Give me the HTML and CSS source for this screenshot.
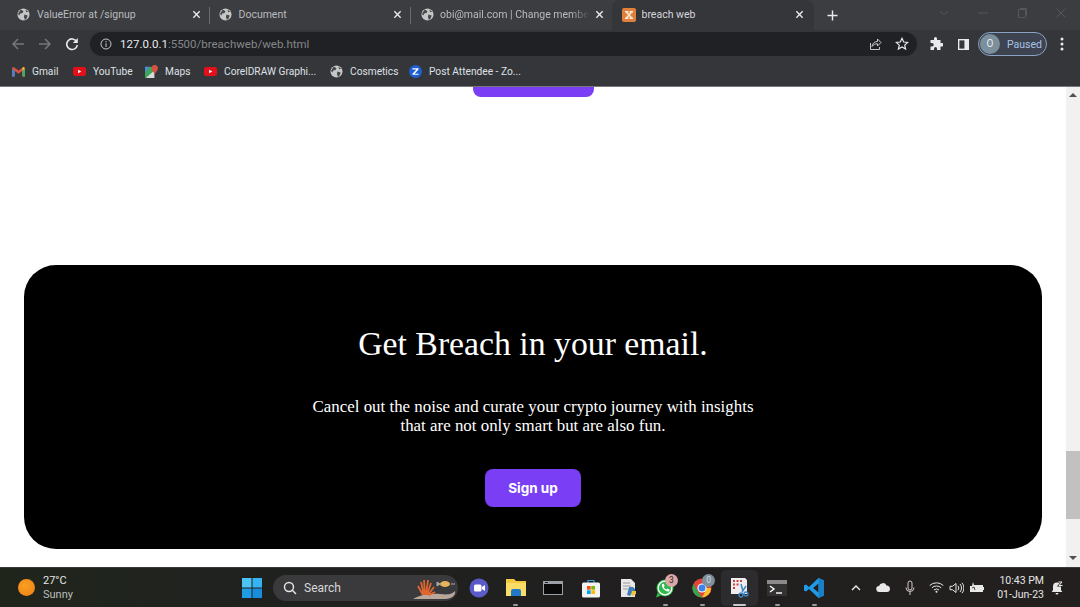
FILE: index.html
```html
<!DOCTYPE html>
<html lang="en">
<head>
<meta charset="utf-8">
<title>breach web</title>
<link rel="stylesheet" href="styles.css">
</head>
<body>
<svg class="defs" width="0" height="0">
  <defs>
    <symbol id="globe" viewBox="0 0 14 14">
      <circle cx="7" cy="7" r="6.500" fill="#c4c7c5"/>
      <path d="M4 1.500 7 3.500 6 5.500 3.500 6 2.500 8 1 6.500ZM8 7l3.500 1-1 3-2 2-1-3.500ZM9 1.500l3 2.500-2 .5Z" fill="#45474a"/>
    </symbol>
    <symbol id="close" viewBox="0 0 10 10">
      <path d="M1.500 1.500l7 7M8.500 1.500l-7 7" stroke="#e8eaed" stroke-width="1.500" fill="none"/>
    </symbol>
    <symbol id="yt" viewBox="0 0 14 10">
      <rect width="14" height="10" rx="3" fill="#e3101b"/>
      <path d="M5.500 3v4L9 5Z" fill="#fff"/>
    </symbol>
  </defs>
</svg>

<header class="tabstrip">
  <div class="tab">
    <svg class="favicon"><use href="#globe"/></svg>
    <span class="tab-title">ValueError at /signup</span>
    <svg class="tab-x"><use href="#close"/></svg>
  </div>
  <div class="tab">
    <svg class="favicon"><use href="#globe"/></svg>
    <span class="tab-title">Document</span>
    <svg class="tab-x"><use href="#close"/></svg>
  </div>
  <div class="tab tab-third">
    <svg class="favicon"><use href="#globe"/></svg>
    <span class="tab-title tab-fade">obi@mail.com | Change membe</span>
    <svg class="tab-x"><use href="#close"/></svg>
  </div>
  <div class="tab tab-active">
    <svg class="favicon favicon-xampp" viewBox="0 0 14 14">
      <rect width="14" height="14" rx="2" fill="#e0803a"/>
      <path d="M3 3h3.500v1.500h-.6L7 5.800 8.100 4.500h-.6V3H11v1.500h-.8L8 7l2.200 2.500h.8V11H7.500V9.500h.6L7 8.200 5.900 9.500h.6V11H3V9.500h.8L6 7 3.800 4.500H3Z" fill="#fbe6d3"/>
    </svg>
    <span class="tab-title tab-title-active">breach web</span>
    <svg class="tab-x"><use href="#close"/></svg>
  </div>
  <svg class="newtab" viewBox="0 0 12 12"><path d="M6 .5v11M.5 6h11" stroke="#e8eaed" stroke-width="1.600"/></svg>
  <div class="winctl">
    <svg viewBox="0 0 10 10"><path d="M1 3.500l4 3 4-3" stroke="#55575b" fill="none"/></svg>
    <svg viewBox="0 0 10 10"><path d="M0 5h10" stroke="#55575b"/></svg>
    <svg viewBox="0 0 10 10"><path d="M1.500 1.500h7v8h-7ZM3 1.500V.5h6.500v7" stroke="#55575b" fill="none"/></svg>
    <svg viewBox="0 0 10 10"><path d="M.5.5l9 9M9.500.5l-9 9" stroke="#55575b"/></svg>
  </div>
</header>

<div class="toolbar">
  <svg class="nav-icon" viewBox="0 0 14 14"><path d="M13 7H2M7 2 2 7l5 5" stroke="#75777b" stroke-width="1.500" fill="none"/></svg>
  <svg class="nav-icon" viewBox="0 0 14 14"><path d="M1 7h11M7 2l5 5-5 5" stroke="#75777b" stroke-width="1.500" fill="none"/></svg>
  <svg class="nav-icon" viewBox="0 0 14 14"><path d="M11.600 4.500A5.300 5.300 0 1 0 12.300 8" stroke="#e8eaed" stroke-width="1.600" fill="none"/><path d="M12.800 1v5h-5Z" fill="#e8eaed"/></svg>
  <div class="omnibox">
    <svg class="info" viewBox="0 0 12 12"><circle cx="6" cy="6" r="5" stroke="#c4c7c5" fill="none"/><path d="M6 5.200V9M6 3v1.200" stroke="#c4c7c5"/></svg>
    <span class="url"><span class="url-host">127.0.0.1</span>:5500/breachweb/web.html</span>
    <svg class="omni-icon" viewBox="0 0 14 14"><path d="M2.500 6v6.500h9V10M4 9.500C4.500 6 7 4.500 9.500 4.500V2L13 5.500 9.500 9V6.800C7 6.800 5.500 7.500 4 9.500Z" stroke="#c4c7c5" fill="none"/></svg>
    <svg class="omni-icon omni-star" viewBox="0 0 14 14"><path d="M7 1.300l1.700 3.700 4 .4-3 2.700.9 4L7 10l-3.600 2.100.9-4-3-2.700 4-.4Z" stroke="#e8eaed" stroke-width="1.200" fill="none"/></svg>
  </div>
  <svg class="ext" viewBox="0 0 14 14"><path d="M5 1.500a1.500 1.500 0 0 1 3 0V3h3.500v3H13a1.700 1.700 0 0 1 0 3.500h-1.500V13H8v-1.500a1.500 1.500 0 0 0-3 0V13H1.500V9.500H3A1.700 1.700 0 0 0 3 6H1.500V3H5Z" fill="#e8eaed"/></svg>
  <svg class="side" viewBox="0 0 12 12"><path d="M0 0h12v12H0Z" fill="#e8eaed"/><path d="M1.500 1.500h5.500v9H1.500Z" fill="#35363a"/></svg>
  <div class="profile">
    <span class="avatar">O</span>
    <span class="paused">Paused</span>
  </div>
  <svg class="kebab" viewBox="0 0 4 14"><circle cx="2" cy="2" r="1.500" fill="#e8eaed"/><circle cx="2" cy="7" r="1.500" fill="#e8eaed"/><circle cx="2" cy="12" r="1.500" fill="#e8eaed"/></svg>
</div>

<nav class="bookmarks">
  <div class="bm bm-gmail">
    <svg viewBox="0 0 14 11"><path d="M0 2v9h3V5l4 3 4-3v6h3V2L12.500.5 7 4.500 1.500.5Z" fill="#d8503f"/><path d="M0 2v9h3V5Z" fill="#4a80c8"/><path d="M11 5v6h3V2Z" fill="#4aa860"/><path d="M12.500.5 14 2l-3 3V2Z" fill="#e8b93c"/></svg>
    <span>Gmail</span>
  </div>
  <div class="bm bm-yt"><svg viewBox="0 0 14 10"><use href="#yt"/></svg><span>YouTube</span></div>
  <div class="bm bm-maps">
    <svg viewBox="0 0 14 14"><path d="M0 2h10v12H0Z" fill="#3ba55c"/><path d="M1 14 10 6v8Z" fill="#d8dadc"/><path d="M0 2h5L0 8Z" fill="#4a8ae0"/><path d="M10.500 0A3.300 3.300 0 0 1 14 3.500C14 6 11.500 7.500 10.500 10 9.500 7.500 7 6 7 3.500A3.300 3.300 0 0 1 10.500 0Z" fill="#d8503f"/></svg>
    <span>Maps</span>
  </div>
  <div class="bm bm-corel"><svg viewBox="0 0 14 10"><use href="#yt"/></svg><span>CorelDRAW Graphi...</span></div>
  <div class="bm bm-cos"><svg viewBox="0 0 14 14"><use href="#globe"/></svg><span>Cosmetics</span></div>
  <div class="bm bm-zoom">
    <svg viewBox="0 0 14 14"><circle cx="7" cy="7" r="7" fill="#1f5fd6"/><path d="M3.800 3.500h6.400v1.300L6 9.300h4.300v1.300H3.700V9.300L8 4.800H3.800Z" fill="#fff"/></svg>
    <span>Post Attendee - Zo...</span>
  </div>
</nav>

<div class="viewport">
  <main class="page">
    <a class="top-btn"></a>
    <section class="card">
      <h1 class="card-title">Get Breach in your email.</h1>
      <p class="card-text">Cancel out the noise and curate your crypto journey with insights<br>that are not only smart but are also fun.</p>
      <button class="signup">Sign up</button>
    </section>
  </main>
  <aside class="scrollbar">
    <span class="arrow-up"></span>
    <span class="thumb"></span>
    <span class="arrow-down"></span>
  </aside>
</div>

<footer class="taskbar">
  <div class="weather">
    <span class="sun"></span>
    <div class="weather-text">
      <span class="temp">27°C</span>
      <span class="cond">Sunny</span>
    </div>
  </div>
  <svg class="start" viewBox="0 0 20 20">
    <rect width="9.500" height="9.500" fill="#4cc2f5"/><rect x="10.500" width="9.500" height="9.500" fill="#35b4f1"/>
    <rect y="10.500" width="9.500" height="9.500" fill="#1f9be6"/><rect x="10.500" y="10.500" width="9.500" height="9.500" fill="#1a8cdc"/>
  </svg>
  <div class="search">
    <svg class="search-icon" viewBox="0 0 14 14"><circle cx="6" cy="6" r="4.500" stroke="#e8e8e8" stroke-width="1.400" fill="none"/><path d="M9.300 9.300 13 13" stroke="#e8e8e8" stroke-width="1.400"/></svg>
    <span class="search-text">Search</span>
    <svg class="search-art" viewBox="0 0 44 24">
      <path d="M0 23c8-5 18-6 27-5s12 0 15-3c1 4-3 8-10 8Z" fill="#b9a79b"/>
      <path d="M11 19 8 6M12 19l-1-15M13 19l2-15M14 19l4-12M15 19l6-8M10 19 5 10M16 19l6-3" stroke="#e0662f" stroke-width="1.800" fill="none"/>
      <ellipse cx="32" cy="8" rx="5" ry="3" fill="#e6b35c"/><path d="M27 8l-3-2v4ZM38 8h4" stroke="#a9a9a9" fill="#a9a9a9"/>
    </svg>
  </div>
  <div class="apps">
    <div class="app">
      <svg viewBox="0 0 20 20"><circle cx="10" cy="10" r="9.500" fill="#5a5bc9"/><rect x="5" y="6.500" width="7.500" height="7" rx="1.500" fill="#fff"/><path d="M13 9l3-2v6l-3-2Z" fill="#fff"/></svg>
    </div>
    <div class="app app-open">
      <svg viewBox="0 0 20 20"><path d="M0 1h8l2 2h10v15H0Z" fill="#f3c93d"/><path d="M0 5h20v13H0Z" fill="#fbdc67"/><path d="M5 13q0-2 2-2h6q2 0 2 2v5H5Z" fill="#1f78c8"/></svg>
      <i class="dot"></i>
    </div>
    <div class="app">
      <svg viewBox="0 0 20 20"><rect y="3" width="20" height="14" fill="#9aa0a6"/><rect x="1" y="6" width="18" height="10" fill="#0a0a0a"/><path d="M2 4.500h3" stroke="#222"/></svg>
    </div>
    <div class="app">
      <svg viewBox="0 0 20 20"><path d="M7 5V2.500h6V5" stroke="#3aa0d8" stroke-width="1.200" fill="none"/><rect x="1" y="4.500" width="18" height="15" rx="1.500" fill="#f2f2f2"/><rect x="6" y="8" width="3.700" height="3.700" fill="#f25022"/><rect x="10.300" y="8" width="3.700" height="3.700" fill="#7fba00"/><rect x="6" y="12.300" width="3.700" height="3.700" fill="#00a4ef"/><rect x="10.300" y="12.300" width="3.700" height="3.700" fill="#ffb900"/></svg>
    </div>
    <div class="app">
      <svg viewBox="0 0 20 20"><path d="M3 1h10l4 4v14H3Z" fill="#e8e8e8"/><path d="M5 5h7M5 8h8M5 11h5" stroke="#9a9a9a"/><path d="M11 9h4l2 2v3l-3 1-2 3-3-1 1-4Z" fill="#3d7eb8"/><path d="M14 13h4v3l-3 2-2-1Z" fill="#f0c53f"/></svg>
    </div>
    <div class="app app-open">
      <svg viewBox="0 0 20 20"><circle cx="10" cy="10" r="8.500" fill="#2fb84a"/><path d="M1 19.500l1.700-5 3.200 3.200Z" fill="#2fb84a"/><circle cx="10" cy="10" r="6.800" fill="#2fb84a" stroke="#fff" stroke-width="1.300"/><path d="M7 6l1.700-.3 1 2.300-1 1c.6 1.300 1.400 2 2.700 2.600l1-1 2.200 1-.3 1.600c-2.500 1.300-8.500-2.700-7.300-7.200Z" fill="#fff"/></svg>
      <span class="badge badge-wa">3</span>
      <i class="dot"></i>
    </div>
    <div class="app app-open">
      <svg viewBox="0 0 20 20"><circle cx="10" cy="10" r="9.500" fill="#e0453a"/><path d="M1.300 6 6 14l4 5.500A9.500 9.500 0 0 1 1.300 6Z" fill="#2da84e"/><path d="M10 19.500 14 12l-.5-2H19a9.500 9.500 0 0 1-9 9.500Z" fill="#fbc02d"/><circle cx="10" cy="10" r="4.600" fill="#fff"/><circle cx="10" cy="10" r="3.500" fill="#3f83ea"/></svg>
      <span class="badge badge-chrome">0</span>
      <i class="dot"></i>
    </div>
    <div class="app app-active">
      <svg viewBox="0 0 20 20"><path d="M1 0h14l2 2v14H1Z" fill="#f0edf0"/><path d="M3 2h2v2H3ZM6.500 2h2v2h-2ZM10 2h2v2h-2ZM3 5.500h2v2H3ZM6.500 5.500h2v2h-2ZM3 9h2v2H3Z" fill="#c8423f"/><path d="M11 6 13 13.500M16 8l-4 6" stroke="#3d87c4" stroke-width="1.500"/><circle cx="11" cy="17" r="2" fill="none" stroke="#3d87c4" stroke-width="1.300"/><circle cx="16" cy="16" r="2" fill="none" stroke="#3d87c4" stroke-width="1.300"/></svg>
      <i class="dash"></i>
    </div>
    <div class="app app-open">
      <svg viewBox="0 0 20 20"><rect y="2" width="20" height="16" rx="1" fill="#333"/><rect y="2" width="20" height="4" fill="#8a8a8a"/><path d="M3 8l4 3-4 3" stroke="#fff" stroke-width="1.400" fill="none"/><path d="M9 15h6" stroke="#fff" stroke-width="1.400"/></svg>
      <i class="dot"></i>
    </div>
    <div class="app app-open">
      <svg viewBox="0 0 20 20"><path d="M14.500 0 20 2.500v15L14.500 20 5 11l-3 2.500L0 12.500v-5L2 6.500 5 9ZM14.500 5.500 9 10l5.500 4.500Z" fill="#1f9ce8"/><path d="M14.500 0 20 2.500v15L14.500 20Z" fill="#1a7fc8"/></svg>
      <i class="dot"></i>
    </div>
  </div>
  <div class="tray">
    <svg class="tray-chev" viewBox="0 0 10 6"><path d="M1 5l4-4 4 4" stroke="#f0f0f0" stroke-width="1.300" fill="none"/></svg>
    <svg class="tray-cloud" viewBox="0 0 14 9"><path d="M3.500 9a3 3 0 0 1-.5-6 4 4 0 0 1 7.500-.5A3.300 3.300 0 0 1 14 6c0 1.800-1.300 3-3 3Z" fill="#e8e8e8"/></svg>
    <svg class="tray-mic" viewBox="0 0 10 16"><rect x="3" y="1" width="4" height="9" rx="2" stroke="#d8c8c8" fill="none"/><path d="M1 7.500a4 4 0 0 0 8 0M5 11.500V15" stroke="#d8c8c8" fill="none"/></svg>
    <svg class="tray-wifi" viewBox="0 0 15 11"><path d="M.7 3.500a10 10 0 0 1 13.600 0M2.800 5.800a7 7 0 0 1 9.400 0M4.900 8a4 4 0 0 1 5.200 0" stroke="#e8e8e8" fill="none"/><circle cx="7.500" cy="9.800" r="1" fill="#e8e8e8"/></svg>
    <svg class="tray-vol" viewBox="0 0 15 12"><path d="M1 4.300h2.500L7 1.500v9L3.500 7.700H1Z" stroke="#e8e8e8" fill="none"/><path d="M9 3.800a3.500 3.500 0 0 1 0 4.400M11 2a6 6 0 0 1 0 8M13 .8a8 8 0 0 1 0 10.400" stroke="#e8e8e8" fill="none"/></svg>
    <svg class="tray-bat" viewBox="0 0 14 11"><path d="M0 4h2l1-4 1 3h9v7H0Z" fill="#e8e8e8"/><path d="M13 5h1v3h-1Z" fill="#e8e8e8"/><path d="M2 6l2-1 1 3" stroke="#444" fill="none"/></svg>
    <div class="clock">
      <span>10:43 PM</span>
      <span>01-Jun-23</span>
    </div>
    <svg class="tray-bell" viewBox="0 0 12 14"><path d="M6 1.500a4 4 0 0 0-4 4V9L.7 11h10.600L10 9V5.500a4 4 0 0 0-4-4ZM4.500 12h3a1.500 1.500 0 0 1-3 0Z" fill="#e8e8e8"/><path d="M7.500 1h3.500L8 4.500h3.500" stroke="#202020" stroke-width="2" fill="none"/><path d="M7.500 1h3.500L8 4.500h3.500" stroke="#f0f0f0" fill="none"/></svg>
  </div>
</footer>
</body>
</html>
```

FILE: styles.css
```css
* { box-sizing: border-box; margin: 0; padding: 0; }

html, body { width: 1080px; height: 607px; overflow: hidden; }

body {
  display: flex;
  flex-direction: column;
  background: #fff;
  font-family: Roboto, "Open Sans", sans-serif;
}

.defs { position: absolute; }

/* Tab strip */
.tabstrip {
  height: 30px;
  flex: none;
  display: flex;
  align-items: center;
  padding-left: 8px;
  background: #3b3d41;
}

.tab {
  position: relative;
  width: 201.500px;
  height: 30px;
  flex: none;
  display: flex;
  align-items: center;
  padding: 0 9px 1px 9px;
}

.tab:not(.tab-active):not(.tab-third)::after {
  content: "";
  position: absolute;
  right: 0;
  top: 7px;
  width: 1px;
  height: 17px;
  background: #6a6c70;
}

.tab-active {
  width: 202px;
  margin-left: -1px;
  padding-left: 10px;
  padding-right: 9.500px;
  background: #35363a;
  border-radius: 8px 8px 0 0;
}

.favicon { width: 13px; height: 13px; flex: none; }
.favicon-xampp { width: 14px; height: 14px; }

.tab-title {
  flex: 1;
  min-width: 0;
  margin-left: 7px;
  font-size: 10.500px;
  color: #b9bbbe;
  white-space: nowrap;
  overflow: hidden;
}

.tab-third .tab-title { margin-left: 6px; margin-right: 6px; }
.tab-third { padding-left: 10px; }
.tab-title-active { color: #d5d7da; margin-left: 6px; }

.tab-fade {
  -webkit-mask-image: linear-gradient(to right, #000 88%, transparent 100%);
  mask-image: linear-gradient(to right, #000 88%, transparent 100%);
}

.tab-x { width: 9px; height: 9px; flex: none; margin-left: auto; }

.newtab { width: 11px; height: 11px; margin-left: 13.500px; flex: none; }

.winctl {
  margin-left: auto;
  display: flex;
  align-items: center;
  gap: 29px;
  padding-right: 14px;
  padding-bottom: 4px;
}

.winctl svg { width: 10px; height: 10px; }

/* Toolbar */
.toolbar {
  height: 28px;
  flex: none;
  display: flex;
  align-items: center;
  background: #35363a;
  padding-left: 11px;
}

.nav-icon { width: 14px; height: 14px; margin-right: 13px; flex: none; }

.omnibox {
  width: 827px;
  height: 24px;
  margin-left: -2px;
  flex: none;
  display: flex;
  align-items: center;
  padding: 0 8px 0 10px;
  background: #202124;
  border-radius: 12px;
}

.info { width: 12px; height: 12px; flex: none; }

.url {
  margin-left: 8px;
  flex: 1;
  font-size: 11.500px;
  color: #85878b;
  white-space: nowrap;
}

.url-host { color: #e8eaed; }

.omni-icon { width: 14px; height: 14px; flex: none; }
.omni-star { margin-left: 13px; }

.ext { width: 14px; height: 14px; margin-left: 12px; flex: none; }
.side { width: 11px; height: 11px; margin-left: 14.500px; flex: none; }

.profile {
  width: 69px;
  height: 24px;
  margin-left: 9.500px;
  display: flex;
  align-items: center;
  padding-left: 1px;
  border: 1px solid #8aa3c4;
  border-radius: 12px;
  background: #3d4450;
  flex: none;
}

.avatar {
  width: 20px;
  height: 20px;
  border-radius: 50%;
  background: #7b8f9c;
  color: #e8eaed;
  font-size: 10px;
  line-height: 20px;
  text-align: center;
}

.paused { margin-left: 7px; font-size: 10.500px; color: #a8c2e8; }

.kebab { width: 4px; height: 14px; margin-left: 13px; flex: none; }

/* Bookmarks */
.bookmarks {
  height: 29px;
  flex: none;
  display: flex;
  align-items: center;
  padding: 0 0 2px 12px;
  background: #35363a;
  border-bottom: 1px solid #75777b;
}

.bm {
  display: flex;
  align-items: center;
  font-size: 10.200px;
  color: #dfe1e4;
  white-space: nowrap;
}

.bm svg { width: 13px; height: 13px; margin-right: 7px; flex: none; }
.bm-gmail { width: 61px; }
.bm-yt { width: 72px; }
.bm-maps { width: 59px; }
.bm-corel { width: 126px; }
.bm-cos { width: 79px; }

/* Viewport */
.viewport {
  flex: 1;
  min-height: 0;
  display: flex;
  background: #fff;
}

.page {
  flex: 1;
  min-width: 0;
  display: flex;
  flex-direction: column;
  align-items: center;
  padding: 0 24px;
}

.top-btn {
  display: block;
  width: 121px;
  height: 10px;
  background: #7a3ff5;
  border-radius: 0 0 8px 8px;
}

.card {
  width: 100%;
  height: 284px;
  margin-top: 168px;
  display: flex;
  flex-direction: column;
  align-items: center;
  background: #000;
  border-radius: 32px;
  color: #fff;
  font-family: "Liberation Serif", "Times New Roman", serif;
  text-align: center;
}

.card-title {
  margin-top: 60px;
  font-size: 33.750px;
  line-height: 37px;
  font-weight: 400;
}

.card-text {
  margin-top: 35px;
  font-size: 16.900px;
  line-height: 19px;
}

.signup {
  width: 96px;
  height: 38px;
  margin-top: 34px;
  border: 0;
  border-radius: 8px;
  background: #7a3ff5;
  color: #fff;
  font-family: Inter, "Liberation Sans", sans-serif;
  font-size: 13.500px;
  font-weight: 700;
}

.scrollbar {
  width: 14px;
  flex: none;
  display: flex;
  flex-direction: column;
  align-items: center;
  background: #f1f1f1;
}

.arrow-up {
  margin-top: 6px;
  border-left: 4px solid transparent;
  border-right: 4px solid transparent;
  border-bottom: 4px solid #505050;
}

.thumb {
  width: 14px;
  height: 68px;
  margin-top: 354px;
  background: #c1c1c1;
}

.arrow-down {
  margin-top: 37px;
  border-left: 4px solid transparent;
  border-right: 4px solid transparent;
  border-top: 4px solid #505050;
}

/* Taskbar */
.taskbar {
  height: 40px;
  flex: none;
  display: flex;
  align-items: center;
  background: linear-gradient(to right, #20251c, #1f211f 25%, #211f1f 60%, #221f1e);
  border-top: 1px solid #3a3a3a;
}

.weather {
  width: 242px;
  display: flex;
  align-items: center;
  padding-left: 18px;
}

.sun {
  width: 17px;
  height: 17px;
  border-radius: 50%;
  background: radial-gradient(circle at 40% 40%, #f8a020, #ee7d18);
}

.weather-text {
  margin-left: 8px;
  display: flex;
  flex-direction: column;
  font-size: 11px;
  line-height: 14px;
  color: #e6e6e6;
}

.cond { color: #bdbdbd; }

.start { width: 20px; height: 20px; flex: none; }

.search {
  width: 185px;
  height: 26px;
  margin-left: 11px;
  display: flex;
  align-items: center;
  padding-left: 10px;
  background: #3a3a3c;
  border-radius: 13px;
  flex: none;
}

.search-icon { width: 14px; height: 14px; flex: none; }
.search-text { margin-left: 7px; flex: 1; font-size: 12px; color: #d8d8d8; }
.search-art { width: 44px; height: 24px; flex: none; margin-right: 1px; }

.apps {
  display: flex;
  align-items: center;
  margin-left: 2px;
}

.app {
  position: relative;
  width: 37.300px;
  height: 36px;
  display: flex;
  align-items: center;
  justify-content: center;
  flex: none;
}

.app svg { width: 20px; height: 20px; }

.app-active {
  background: #2c2c2e;
  border-radius: 5px;
}

.dot, .dash {
  position: absolute;
  bottom: 0;
  left: 50%;
  height: 2px;
  border-radius: 1px;
}

.dot { width: 5px; margin-left: -2.500px; background: #9a9a9a; }
.dash { width: 13px; margin-left: -6.500px; background: #c8c8c8; }

.badge {
  position: absolute;
  top: 4px;
  right: 6px;
  width: 13px;
  height: 13px;
  border-radius: 50%;
  font-size: 8.500px;
  line-height: 13px;
  text-align: center;
}

.badge-wa { background: #d9a8a8; color: #3a2020; }
.badge-chrome { background: #7f8f9c; color: #d8dde0; }

.tray {
  flex: 1;
  display: flex;
  align-items: center;
  margin-left: 18px;
}

.tray-chev { width: 10px; height: 6px; flex: none; }
.tray-cloud { width: 14px; height: 9px; margin-left: 15px; flex: none; }
.tray-mic { width: 10px; height: 16px; margin-left: 15px; flex: none; }
.tray-wifi { width: 15px; height: 11px; margin-left: 14px; flex: none; }
.tray-vol { width: 15px; height: 12px; margin-left: 5px; flex: none; }
.tray-bat { width: 14px; height: 11px; margin-left: 6px; flex: none; }

.clock {
  width: 50px;
  margin-left: 10px;
  display: flex;
  flex-direction: column;
  align-items: flex-end;
  font-size: 10.500px;
  line-height: 14px;
  color: #e6e6e6;
  white-space: nowrap;
}

.tray-bell { width: 12px; height: 14px; margin-left: 7px; flex: none; }
```
